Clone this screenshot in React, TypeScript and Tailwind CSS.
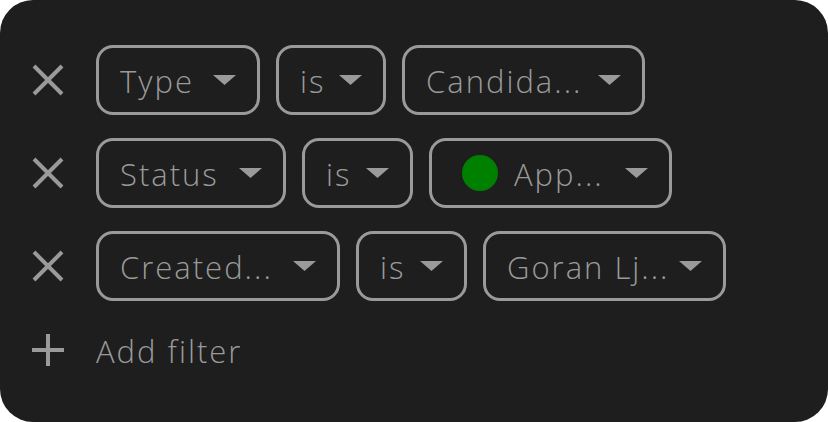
import React from 'react';

interface Chip {
  label: string;
  width: string;
  dot?: boolean;
}

const rows: Chip[][] = [
  [
    { label: 'Type', width: 'w-[164px]' },
    { label: 'is', width: 'w-[110px]' },
    { label: 'Candida...', width: 'w-[243px]' },
  ],
  [
    { label: 'Status', width: 'w-[190px]' },
    { label: 'is', width: 'w-[111px]' },
    { label: 'App...', width: 'w-[243px]', dot: true },
  ],
  [
    { label: 'Created...', width: 'w-[244px]' },
    { label: 'is', width: 'w-[111px]' },
    { label: 'Goran Lj...', width: 'w-[243px]' },
  ],
];

function Caret() {
  return (
    <svg width="23" height="10" viewBox="0 0 23 10" className="shrink-0">
      <path d="M0 0 H23 L11.5 10 Z" fill="#9a9a9a" />
    </svg>
  );
}

function CloseIcon() {
  return (
    <svg width="34" height="34" viewBox="0 0 34 34">
      <path d="M3 3 L31 31 M31 3 L3 31" stroke="#9a9a9a" strokeWidth="4" />
    </svg>
  );
}

function PlusIcon() {
  return (
    <svg width="34" height="34" viewBox="0 0 34 34">
      <path d="M17 1 V33 M1 17 H33" stroke="#9a9a9a" strokeWidth="4" />
    </svg>
  );
}

function FilterChip({ chip }: { chip: Chip }) {
  return (
    <div
      className={`${chip.width} h-[70px] shrink-0 flex items-center justify-between border-[3px] border-[#9a9a9a] rounded-[17px] pl-[21px] pr-[21px]`}
    >
      <div className="flex items-center gap-[16px]">
        {chip.dot && <span className="ml-[9px] w-[36px] h-[36px] rounded-full bg-[#008000] shrink-0" />}
        <span className="whitespace-nowrap pt-[3px]">{chip.label}</span>
      </div>
      <Caret />
    </div>
  );
}

export default function App() {
  return (
    <div
      className="w-[828px] h-[422px] bg-[#1e1e1e] rounded-[33px] pt-[45px] pl-[31px] text-[#9a9a9a] text-[31px] font-light tracking-[2px]"
      style={{ fontFamily: '"Open Sans", "Liberation Sans", sans-serif' }}
    >
      <div className="flex flex-col gap-[23px]">
        {rows.map((row, i) => (
          <div key={i} className="flex items-center">
            <div className="w-[65px] shrink-0 flex items-center">
              <CloseIcon />
            </div>
            <div className="flex items-center gap-[16px]">
              {row.map((chip, j) => (
                <FilterChip key={j} chip={chip} />
              ))}
            </div>
          </div>
        ))}
        <div className="flex items-center h-[52px]">
          <div className="w-[65px] shrink-0 flex items-center">
            <PlusIcon />
          </div>
          <span className="whitespace-nowrap pt-[3px]">Add filter</span>
        </div>
      </div>
    </div>
  );
}
